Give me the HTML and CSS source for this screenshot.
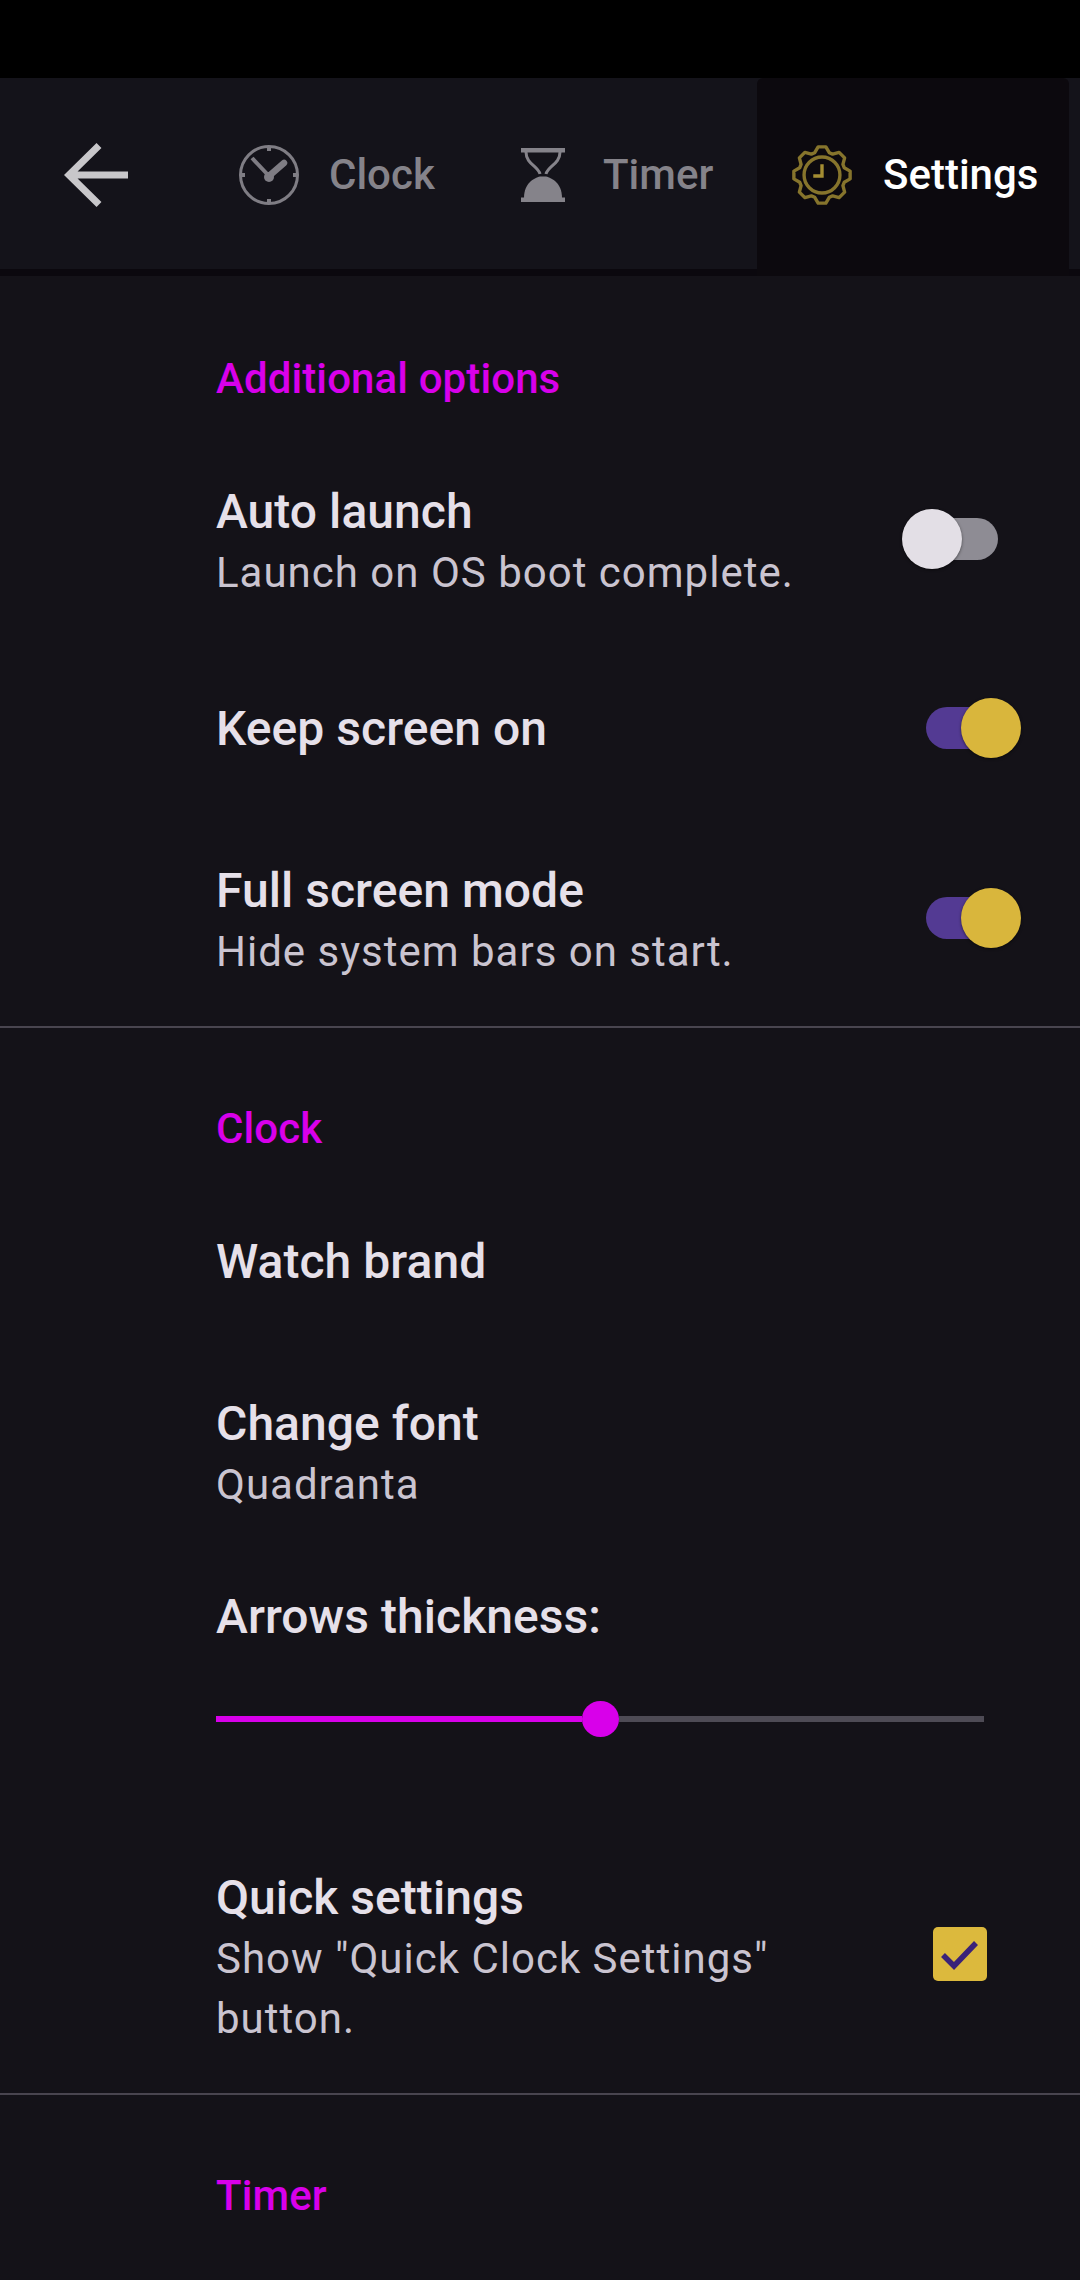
FILE: index.html
```html
<!DOCTYPE html>
<html>
<head>
    <title>Settings</title>
    <link rel="stylesheet" href="styles.css">
</head>
<body>
    <div class="statusbar"></div>

    <div class="toolbar">
        <div class="back">
            <svg width="64" height="64" viewBox="0 0 64 64"><path d="M5 32H64M35 2.500L5 32L35 61.500" fill="none" stroke="#c8c7ca" stroke-width="7"/></svg>
        </div>
        <div class="tab tab-clock">
            <svg class="tabicon" width="60" height="62" viewBox="0 0 60 62">
                <circle cx="30" cy="31" r="28.500" fill="none" stroke="#7f7d84" stroke-width="3"/>
                <path d="M30 3v4M30 55v4M2 31h4M54 31h4" stroke="#7f7d84" stroke-width="4"/>
                <path d="M30 32L13 14" stroke="#7f7d84" stroke-width="4"/>
                <path d="M30 32L45 19" stroke="#7f7d84" stroke-width="6.500" stroke-linecap="round"/>
                <circle cx="30" cy="33" r="5" fill="#7f7d84"/>
            </svg>
            <span>Clock</span>
        </div>
        <div class="tab tab-timer">
            <svg class="tabicon" width="44" height="54" viewBox="0 0 44 54">
                <rect x="0" y="0" width="44" height="4.500" fill="#85838a"/>
                <rect x="0" y="49.500" width="44" height="4.500" fill="#85838a"/>
                <path d="M5 4C5 16 17 18 19 26M39 4C39 16 27 18 25 26" fill="none" stroke="#85838a" stroke-width="3"/>
                <path d="M19 28.500C13 30 3 35 3 50H41C41 35 31 30 25 28.500Z" fill="#85838a"/>
            </svg>
            <span>Timer</span>
        </div>
        <div class="tab tab-settings">
            <svg class="tabicon" width="64" height="66" viewBox="-33 -33 66 66">
                <polygon points="-4,-29 4,-29 7.500,-23 10.960,-21.570 17.680,-23.330 23.330,-17.680 21.570,-10.960 23,-7.500 29,-4 29,4 23,7.500 21.570,10.960 23.330,17.680 17.680,23.330 10.960,21.570 7.500,23 4,29 -4,29 -7.500,23 -10.960,21.570 -17.680,23.330 -23.330,17.680 -21.570,10.960 -23,7.500 -29,4 -29,-4 -23,-7.500 -21.570,-10.960 -23.330,-17.680 -17.680,-23.330 -10.960,-21.570 -7.500,-23" fill="none" stroke="#86742c" stroke-width="3.500" stroke-linejoin="round"/>
                <circle r="18.500" fill="none" stroke="#86742c" stroke-width="3.500"/>
                <path d="M0 -11V1H-9" fill="none" stroke="#a48d33" stroke-width="3.500"/>
            </svg>
            <span>Settings</span>
        </div>
    </div>

    <div class="section">
        <div class="section-title">Additional options</div>
        <div class="row">
            <div class="text">
                <div class="title">Auto launch</div>
                <div class="summary">Launch on OS boot complete.</div>
            </div>
            <div class="switch"><div class="thumb"></div></div>
        </div>
        <div class="row single">
            <div class="text">
                <div class="title">Keep screen on</div>
            </div>
            <div class="switch on"><div class="thumb"></div></div>
        </div>
        <div class="row end">
            <div class="text">
                <div class="title">Full screen mode</div>
                <div class="summary">Hide system bars on start.</div>
            </div>
            <div class="switch on"><div class="thumb"></div></div>
        </div>
    </div>

    <div class="section">
        <div class="section-title">Clock</div>
        <div class="row single first">
            <div class="text">
                <div class="title">Watch brand</div>
            </div>
        </div>
        <div class="row">
            <div class="text">
                <div class="title">Change font</div>
                <div class="summary">Quadranta</div>
            </div>
        </div>
        <div class="slider-row">
            <div class="title">Arrows thickness:</div>
            <div class="slider">
                <div class="slider-fill"></div>
                <div class="slider-thumb"></div>
                <div class="slider-rest"></div>
            </div>
        </div>
        <div class="row end">
            <div class="text">
                <div class="title">Quick settings</div>
                <div class="summary">Show "Quick Clock Settings" button.</div>
            </div>
            <div class="checkbox">
                <svg width="54" height="54" viewBox="0 0 54 54"><path d="M10 28L21 39L43 16" fill="none" stroke="#3a2279" stroke-width="5.500"/></svg>
            </div>
        </div>
    </div>

    <div class="section last">
        <div class="section-title">Timer</div>
    </div>
</body>
</html>
```

FILE: styles.css
```css
html, body {
    margin: 0;
    height: 2280px;
    overflow: hidden;
}

body {
    background-color: #141218;
    color: #e6e0e9;
    font-family: Roboto, "Noto Sans", sans-serif;
}

.statusbar {
    height: 78px;
    background-color: #000;
}

.toolbar {
    display: flex;
    height: 191px;
    margin-bottom: 2px;
    border-bottom: 7px solid #0b080e;
    background-color: #14131a;
}

.back {
    display: flex;
    align-items: center;
    width: 204px;
    padding-top: 2px;
    padding-left: 64px;
    box-sizing: border-box;
}

.tab {
    display: flex;
    align-items: center;
    box-sizing: border-box;
    padding-top: 2px;
    font-size: 42px;
    font-weight: 500;
    color: #85838a;
    border-radius: 6px 6px 0 0;
}

.tab-clock {
    width: 278px;
    padding-left: 35px;
    gap: 30px;
}

.tab-timer {
    width: 275px;
    padding-left: 39px;
    gap: 38px;
}

.tab-settings {
    width: 312px;
    padding-left: 33px;
    gap: 29px;
    color: #fff;
    background-color: #0c090e;
    box-shadow: 0 7px 0 #0c090e;
}

.section {
    padding-top: 71px;
    border-bottom: 2px solid #49454f;
}

.section.last {
    border-bottom: none;
}

.section-title {
    padding-left: 216px;
    margin-bottom: 25px;
    font-size: 42px;
    font-weight: 500;
    line-height: 60px;
    letter-spacing: 0.100px;
    color: #d800ea;
}

.row {
    display: flex;
    align-items: center;
    padding: 48px 0 46px 216px;
}

.row.end {
    padding-bottom: 44px;
}

.row.single {
    height: 164px;
    box-sizing: border-box;
    padding-top: 0;
    padding-bottom: 4px;
}

.row.first {
    margin-top: -2px;
}

.text {
    flex: 1;
    min-width: 0;
    max-width: 600px;
}

.title {
    font-size: 48px;
    font-weight: 500;
    line-height: 60px;
    letter-spacing: 0.050px;
}

.summary {
    margin-top: 1px;
    font-size: 42px;
    line-height: 60px;
    letter-spacing: 1px;
    color: #cac4d0;
}

.switch {
    position: relative;
    flex: none;
    width: 72px;
    height: 42px;
    margin-left: auto;
    margin-right: 82px;
    margin-bottom: 8px;
    border-radius: 21px;
    background-color: #8e8c94;
}

.row.single .switch {
    margin-bottom: 2px;
}

.thumb {
    position: absolute;
    top: -9px;
    left: -24px;
    width: 60px;
    height: 60px;
    border-radius: 50%;
    background-color: #e3dfe6;
    box-shadow: 0 1px 3px rgba(0, 0, 0, 0.5);
}

.switch.on {
    background-color: #533a93;
}

.switch.on .thumb {
    left: 35px;
    background-color: #d9b63c;
}

.slider-row {
    padding: 26px 96px 0 216px;
}

.slider {
    display: flex;
    align-items: center;
    height: 36px;
    margin-top: 54px;
    margin-bottom: 83px;
}

.slider-fill {
    width: 366px;
    height: 6px;
    background-color: #d800ea;
}

.slider-thumb {
    flex: none;
    width: 37px;
    height: 36px;
    border-radius: 50%;
    background-color: #d800ea;
}

.slider-rest {
    flex: 1;
    height: 6px;
    background-color: #4e4b55;
}

.checkbox {
    flex: none;
    width: 54px;
    height: 54px;
    margin-left: auto;
    margin-right: 93px;
    margin-bottom: 9px;
    border-radius: 5px;
    background-color: #dcb93d;
}

.checkbox svg {
    display: block;
}
```
